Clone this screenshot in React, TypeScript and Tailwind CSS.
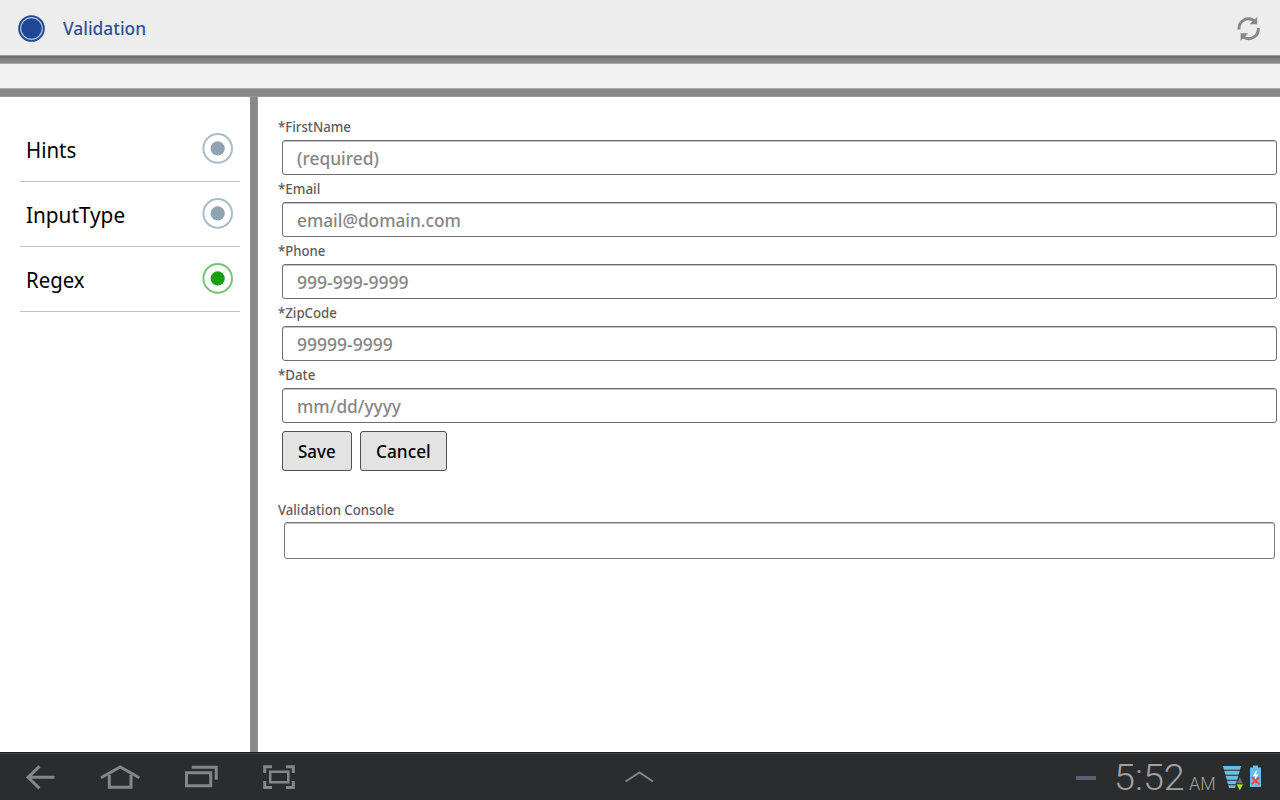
import React from "react";

const fields = [
  { label: "*FirstName", hint: "(required)", lw: "scale-x-[0.945]", hw: "scale-x-[0.965]" },
  { label: "*Email", hint: "email@domain.com", lw: "scale-x-[0.955]", hw: "scale-x-[0.958]" },
  { label: "*Phone", hint: "999-999-9999", lw: "scale-x-[0.94]", hw: "scale-x-[0.975]" },
  { label: "*ZipCode", hint: "99999-9999", lw: "scale-x-[0.945]", hw: "scale-x-[0.972]" },
  { label: "*Date", hint: "mm/dd/yyyy", lw: "scale-x-[0.95]", hw: "scale-x-[0.96]" },
];

const tabs = [
  { name: "Hints", active: false, w: "scale-x-[0.93]" },
  { name: "InputType", active: false, w: "scale-x-[0.943]" },
  { name: "Regex", active: true, w: "scale-x-[0.925]" },
];

function Narrow({ className, children }: { className: string; children: React.ReactNode }) {
  return <span className={`inline-block origin-left whitespace-nowrap ${className}`}>{children}</span>;
}

function Radio({ active }: { active: boolean }) {
  return (
    <svg width="32" height="32" viewBox="0 0 32 32">
      <circle cx="15.700" cy="15.400" r="14.300" fill="#fff" stroke={active ? "#76c576" : "#a9bdc9"} strokeWidth="2" />
      <circle cx="15.700" cy="15.400" r="7.100" fill={active ? "#17a012" : "#8fa3b2"} />
    </svg>
  );
}

function NavIcons() {
  return (
    <svg width="320" height="46" viewBox="0 754 320 46" fill="none" stroke="#858687" strokeWidth="3">
      <path d="M54.500 777.300H28M39.500 766.300L28 777.300L39.500 788.300" />
      <path d="M101 777.700L120.200 767L139.300 777.700" />
      <path d="M109.300 775V787.200H131V775" />
      <path d="M186.500 772.800H210.700V785.700H186.500ZM191.700 767.200H216.200V779.700" />
      <path d="M264.700 773V766.700H272M286 766.700H293.300V773M293.300 781V787.500H286M272 787.500H264.700V781" />
      <path d="M270.200 771.700H288.300V782.300H270.200Z" strokeWidth="2.500" />
    </svg>
  );
}

function StatusIcons() {
  return (
    <svg className="shrink-0" width="42" height="32" viewBox="1222 761.500 42 32">
      <path d="M1223 766.500H1241L1235 788.500H1229Z" fill="#69bde6" />
      <path d="M1222 770.700H1242M1222 775.700H1242M1222 780.700H1242M1222 785.300H1242" stroke="#2b2c2e" strokeWidth="1.100" />
      <path d="M1236 784.500L1239.800 777L1243.600 784.500Z" fill="#6d706d" stroke="#292a2b" strokeWidth=".7" />
      <path d="M1236 784.500H1243.600L1239.800 791.500Z" fill="#a5ed19" stroke="#292a2b" strokeWidth=".7" />
      <path d="M1250 768H1253V766H1258V768H1261V787.500H1250Z" fill="#69bde6" />
      <path d="M1256 771L1252.800 776.700H1255.200L1254.300 781L1258.400 775H1256L1257.500 771Z" fill="#f3fbff" />
      <path d="M1251.700 777.700L1259.300 784.700M1259.300 777.700L1251.700 784.700" stroke="#d9534b" strokeWidth="2.200" />
    </svg>
  );
}

export default function App() {
  return (
    <div className="flex h-[800px] w-[1280px] flex-col overflow-hidden bg-white font-['Noto_Sans','Open_Sans',sans-serif]">
      <header className="flex h-[55px] shrink-0 items-center bg-[#ededed] pl-[18px] pr-[19px]">
        <svg className="mt-[2px]" width="27" height="27" viewBox="0 0 27 27">
          <circle cx="13.500" cy="13.500" r="13.300" fill="#234992" />
          <circle cx="13.500" cy="13.500" r="10.800" fill="#1f4795" stroke="#b4c3dd" strokeWidth="1.200" />
        </svg>
        <h1 className="ml-[18px] mt-px flex-1 text-[18px] font-medium leading-[24px] text-[#30529a]">
          <Narrow className="scale-x-[0.963]">Validation</Narrow>
        </h1>
        <svg className="mt-[2px]" width="24" height="26" viewBox="1237 16 24 26" fill="none" stroke="#868686" strokeWidth="2.900">
          <path d="M1239 29.500C1238.500 20.500 1247.500 16 1254.500 21" />
          <path d="M1258.300 28C1258.800 37 1249.500 41.500 1242.500 36.500" />
          <path d="M1257.200 17V24.200H1249.500Z" fill="#868686" stroke="none" />
          <path d="M1240.600 40.700V33.300H1248.200Z" fill="#868686" stroke="none" />
        </svg>
      </header>
      <div className="h-[9px] shrink-0 border-b border-t border-b-[#aaa9a7] border-t-[#9a9998] bg-linear-to-b from-[#6a6967] to-[#8b8986] to-60%" />
      <div className="h-[24px] shrink-0 bg-[#f2f2f2]" />
      <div className="h-[9px] shrink-0 border-b border-t border-b-[#999795] border-t-[#adacaa] bg-[#898886]" />
      <div className="flex h-[655px] shrink-0">
        <nav className="flex w-[250px] flex-col pl-[20px] pr-[10px] pt-[20px]">
          {tabs.map((t) => (
            <div key={t.name} className="flex h-[65px] items-center justify-between border-b border-[#c0c0c0] pl-[6px] pr-[6px]">
              <span className="-mt-px text-[22px] leading-[30px] text-black">
                <Narrow className={t.w}>{t.name}</Narrow>
              </span>
              <Radio active={t.active} />
            </div>
          ))}
        </nav>
        <div className="w-[8px] shrink-0 border-r border-[#999795] bg-[#898886]" />
        <main className="flex min-w-0 flex-1 flex-col pl-[20px] pr-[3px] pt-[20px]">
          {fields.map((f) => (
            <div key={f.label} className="flex h-[62px] flex-col">
              <label className="h-[23px] text-[14px] font-medium leading-[19px] text-[#5c5c5c]">
                <Narrow className={f.lw}>{f.label}</Narrow>
              </label>
              <div className="ml-[4px] flex h-[35px] items-center rounded-[3px] border border-[#6e6e6e] bg-white pl-[14px] text-[18px] font-medium leading-[24px] text-[#868686] shadow-[inset_0_1px_0_#c4c4c4]">
                <Narrow className={f.hw}>{f.hint}</Narrow>
              </div>
            </div>
          ))}
          <div className="ml-[4px] mt-[4px] flex gap-[8px] text-[18px] font-medium leading-[24px] text-black">
            <button className="flex h-[40px] w-[70px] items-center rounded-[3px] border border-[#505050] bg-[#e3e3e3] pl-[15px]">
              <Narrow className="scale-x-[0.94]">Save</Narrow>
            </button>
            <button className="flex h-[40px] w-[87px] items-center rounded-[3px] border border-[#505050] bg-[#e3e3e3] pl-[15px]">
              <Narrow className="scale-x-[0.96]">Cancel</Narrow>
            </button>
          </div>
          <div className="mt-[29px] h-[22px] text-[14px] font-medium leading-[19px] text-[#5c5c5c]">
            <Narrow className="scale-x-[0.938]">Validation Console</Narrow>
          </div>
          <div className="ml-[6px] mr-[2px] h-[37px] rounded-[3px] border border-[#777] bg-white shadow-[inset_0_1px_0_#c4c4c4]" />
        </main>
      </div>
      <footer className="flex h-[48px] shrink-0 items-center border-t border-[#1c1d1e] bg-[#2b2c2e] shadow-[inset_0_1px_0_#48494a]">
        <NavIcons />
        <svg className="ml-[304px]" width="30" height="14" viewBox="0 0 30 14" fill="none">
          <path d="M1.500 11.500L15.500 2.500L29 11.500" stroke="#858687" strokeWidth="2" />
        </svg>
        <div className="ml-[422px] mt-[3px] h-[4px] w-[20px] bg-[#566272]" />
        <div className="ml-[18px] mt-[3px] flex w-[108px] shrink-0 items-baseline font-['Roboto',sans-serif] font-light text-[#a0a1a2]">
          <span className="w-[74px] text-[36px] leading-[40px]">
            <Narrow className="scale-x-[1.05]">5:52</Narrow>
          </span>
          <span className="ml-px text-[19px] leading-[20px]">
            <Narrow className="scale-x-[0.94]">AM</Narrow>
          </span>
        </div>
        <StatusIcons />
      </footer>
    </div>
  );
}
